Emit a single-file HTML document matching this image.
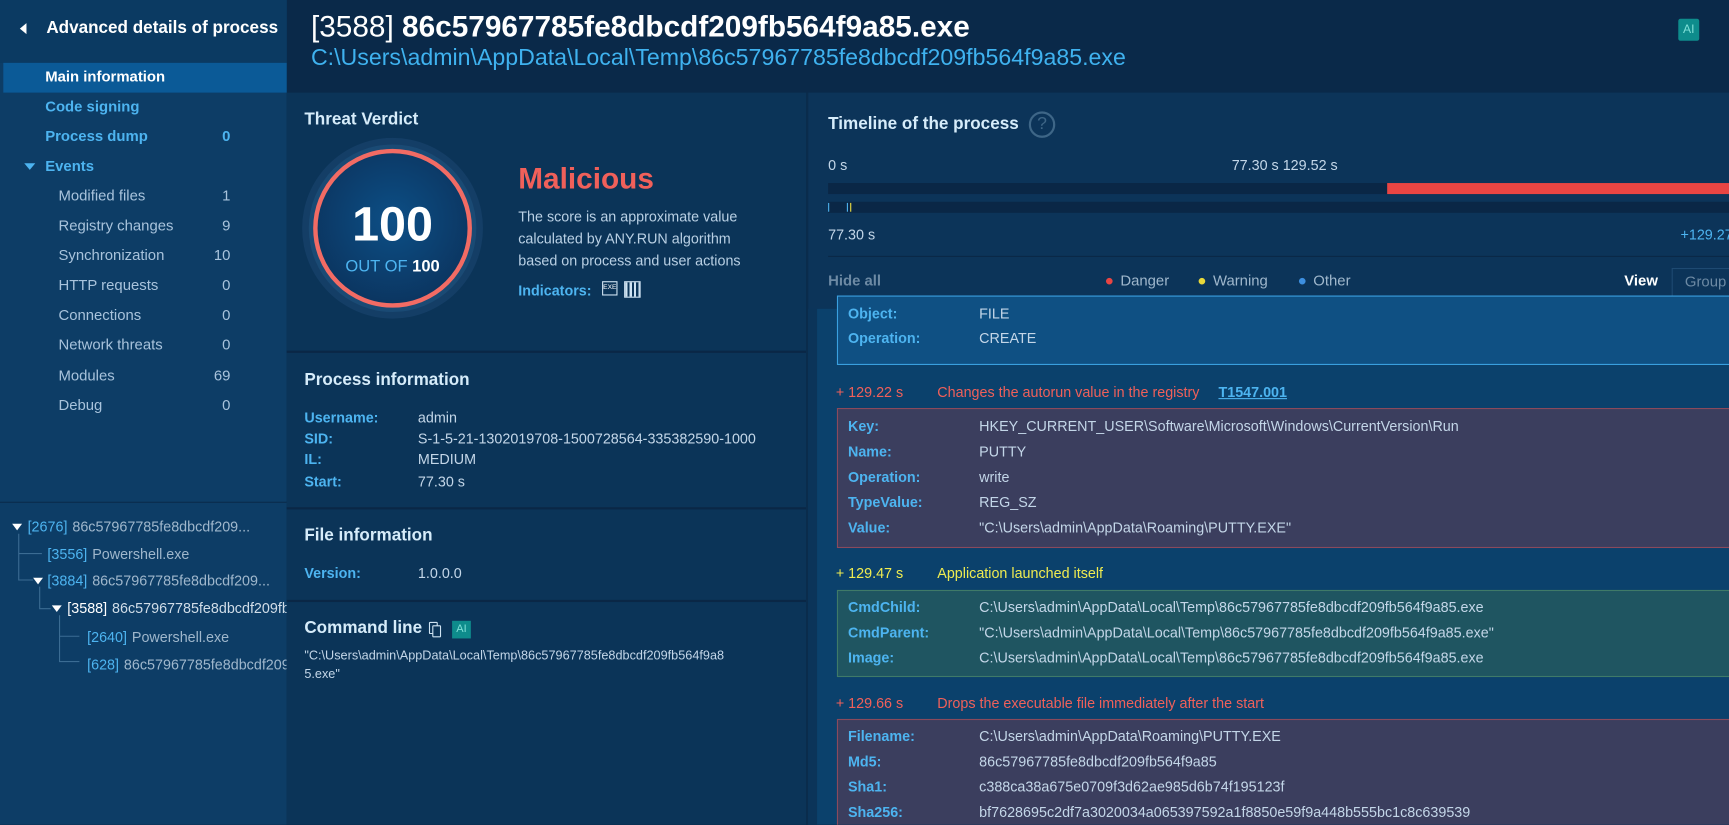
<!DOCTYPE html>
<html><head><meta charset="utf-8"><style>
*{margin:0;padding:0;box-sizing:border-box}
body{width:1729px;height:825px;overflow:hidden;background:#0b2a4a;font-family:"Liberation Sans",sans-serif}
#r{position:absolute;left:0;top:0;width:1568px;height:748px;transform:scale(1.10268);transform-origin:0 0;overflow:hidden;background:#0b2a4a}
.a{position:absolute;white-space:nowrap}
.sb{left:0;top:0;width:260px;height:748px;background:#0d3d66}
.si{font-size:13.5px;color:#a8c3dc;left:53px}
.sh{font-size:13.5px;color:#4db4f0;font-weight:bold;left:41px}
.cnt{left:180px;width:29px;text-align:right;font-size:13.5px;color:#a8c3dc}
.cntb{color:#4db4f0;font-weight:bold}
.lab{font-size:13px;color:#4db4f0;font-weight:bold}
.val{font-size:13px;color:#c3d6e8}
.h{font-size:15.5px;color:#d6ecfa;font-weight:bold}
.card{position:absolute;left:759px;width:820px}
.pid{color:#4db4f0;font-size:13px}
.pn{color:#9fb7cc;font-size:13px}
</style></head><body><div id="r">
<div class="a" style="left:260px;top:0;width:1308px;height:84px;background:#0a2949"></div>
<div class="a" style="left:282px;top:9px;font-size:27px;color:#fff"><span style="font-weight:normal">[3588]</span> <b>86c57967785fe8dbcdf209fb564f9a85.exe</b></div>
<div class="a" style="left:282px;top:41px;font-size:21px;color:#3fb2ef">C:\Users\admin\AppData\Local\Temp\86c57967785fe8dbcdf209fb564f9a85.exe</div>
<div class="a" style="left:1522px;top:17px;width:19px;height:20px;background:#0e8c8c;color:#7fe0d8;font-size:11px;text-align:center;line-height:20px;border-radius:2px">AI</div>
<div class="a sb"></div>
<div class="a" style="left:0;top:0;width:260px;height:57px;background:#0b3a62"></div>
<div class="a" style="left:18px;top:21px;width:0;height:0;border-top:5px solid transparent;border-bottom:5px solid transparent;border-right:6px solid #fff"></div>
<div class="a" style="left:42px;top:17px;font-size:15.5px;color:#fff;font-weight:bold">Advanced details of process</div>
<div class="a" style="left:3px;top:57px;width:257px;height:27px;background:#0b5a97"></div>
<div class="a" style="left:41px;top:62px;font-size:13.5px;color:#fff;font-weight:bold">Main information</div>
<div class="a sh" style="top:89px">Code signing</div>
<div class="a sh" style="top:116px">Process dump</div><div class="a cnt cntb" style="top:116px">0</div>
<div class="a" style="left:22px;top:148px;width:0;height:0;border-left:5px solid transparent;border-right:5px solid transparent;border-top:6px solid #4db4f0"></div>
<div class="a sh" style="top:143px">Events</div>
<div class="a si" style="top:170px">Modified files</div><div class="a cnt" style="top:170px">1</div>
<div class="a si" style="top:197px">Registry changes</div><div class="a cnt" style="top:197px">9</div>
<div class="a si" style="top:224px">Synchronization</div><div class="a cnt" style="top:224px">10</div>
<div class="a si" style="top:251px">HTTP requests</div><div class="a cnt" style="top:251px">0</div>
<div class="a si" style="top:278px">Connections</div><div class="a cnt" style="top:278px">0</div>
<div class="a si" style="top:305px">Network threats</div><div class="a cnt" style="top:305px">0</div>
<div class="a si" style="top:333px">Modules</div><div class="a cnt" style="top:333px">69</div>
<div class="a si" style="top:360px">Debug</div><div class="a cnt" style="top:360px">0</div>
<div class="a" style="left:0;top:455px;width:260px;height:1px;background:#0a2c4c"></div>
<svg class="a" style="left:0;top:460px" width="260" height="160"><g stroke="#3b6c93" fill="none" stroke-width="1">
<path d="M17 24 V66 H30 M17 42 H38"/><path d="M36 72 V92 H46"/><path d="M54 98 V140 H72 M54 117 H72"/></g>
<g fill="#fff"><path d="M11 15 h9 l-4.5 6z"/><path d="M30 64 h9 l-4.5 6z"/><path d="M47 89 h9 l-4.5 6z"/></g></svg>
<div class="a" style="left:25px;top:469px"><span class="pid">[2676]</span> <span class="pn">86c57967785fe8dbcdf209...</span></div>
<div class="a" style="left:43px;top:494px"><span class="pid">[3556]</span> <span class="pn">Powershell.exe</span></div>
<div class="a" style="left:43px;top:518px"><span class="pid">[3884]</span> <span class="pn">86c57967785fe8dbcdf209...</span></div>
<div class="a" style="left:61px;top:543px;width:199px;overflow:hidden"><span class="pid" style="color:#fff">[3588]</span> <span class="pn" style="color:#d0dde8">86c57967785fe8dbcdf209fb564f9a85.exe</span></div>
<div class="a" style="left:79px;top:569px"><span class="pid">[2640]</span> <span class="pn">Powershell.exe</span></div>
<div class="a" style="left:79px;top:594px;width:181px;overflow:hidden"><span class="pid">[628]</span> <span class="pn">86c57967785fe8dbcdf209fb564f9a85.exe</span></div>
<div class="a" style="left:260px;top:84px;width:471px;height:664px;background:#0b3458"></div>
<div class="a h" style="left:276px;top:100px">Threat Verdict</div>
<svg class="a" style="left:271px;top:122px" width="170" height="170">
<defs><radialGradient id="g" cx="50%" cy="45%" r="55%"><stop offset="0" stop-color="#0d4f86"/><stop offset="1" stop-color="#0b3560"/></radialGradient></defs>
<circle cx="85" cy="85" r="82" fill="#143e66"/><circle cx="85" cy="85" r="76" fill="#1a4a74"/>
<circle cx="85" cy="85" r="70" fill="url(#g)" stroke="#f26b64" stroke-width="4"/></svg>
<div class="a" style="left:276px;top:179px;width:160px;text-align:center;font-size:44px;color:#fff;font-weight:bold">100</div>
<div class="a" style="left:276px;top:233px;width:160px;text-align:center;font-size:15px;color:#4db4f0">OUT OF <b style="color:#fff">100</b></div>
<div class="a" style="left:470px;top:147px;font-size:27px;color:#f0605a;font-weight:bold">Malicious</div>
<div class="a" style="left:470px;top:187px;font-size:13px;color:#b9d0e4;line-height:20px">The score is an approximate value<br>calculated by ANY.RUN algorithm<br>based on process and user actions</div>
<div class="a" style="left:470px;top:256px;font-size:13px;color:#4db4f0;font-weight:bold">Indicators:</div>
<div class="a" style="left:546px;top:255px;width:14px;height:13px;border:1px solid #cfe3f2;font-size:6px;color:#fff;text-align:center;line-height:11px">EXE</div>
<div class="a" style="left:566px;top:255px;width:15px;height:15px;border:1px solid #cfe3f2;background:repeating-linear-gradient(90deg,#cfe3f2 0 2px,transparent 2px 4px)"></div>
<div class="a" style="left:260px;top:318px;width:471px;height:2px;background:#0a2746"></div>
<div class="a h" style="left:276px;top:336px">Process information</div>
<div class="a lab" style="left:276px;top:371px">Username:</div><div class="a val" style="left:379px;top:371px">admin</div>
<div class="a lab" style="left:276px;top:390px">SID:</div><div class="a val" style="left:379px;top:390px">S-1-5-21-1302019708-1500728564-335382590-1000</div>
<div class="a lab" style="left:276px;top:409px">IL:</div><div class="a val" style="left:379px;top:409px">MEDIUM</div>
<div class="a lab" style="left:276px;top:429px">Start:</div><div class="a val" style="left:379px;top:429px">77.30 s</div>
<div class="a" style="left:260px;top:460px;width:471px;height:2px;background:#0a2746"></div>
<div class="a h" style="left:276px;top:477px">File information</div>
<div class="a lab" style="left:276px;top:512px">Version:</div><div class="a val" style="left:379px;top:512px">1.0.0.0</div>
<div class="a" style="left:260px;top:544px;width:471px;height:2px;background:#0a2746"></div>
<div class="a h" style="left:276px;top:561px">Command line</div>
<div class="a" style="left:389px;top:564px;width:8px;height:11px;border:1.5px solid #cfe3f2;border-radius:1px"></div>
<div class="a" style="left:392px;top:567px;width:8px;height:11px;border:1.5px solid #cfe3f2;background:#0b3458;border-radius:1px"></div>
<div class="a" style="left:410px;top:563px;width:17px;height:16px;background:#0e8c8c;color:#7fe0d8;font-size:10px;text-align:center;line-height:16px">AI</div>
<div class="a" style="left:276px;top:587px;font-size:11.5px;color:#c3d6e8;line-height:17px">"C:\Users\admin\AppData\Local\Temp\86c57967785fe8dbcdf209fb564f9a8<br>5.exe"</div>
<div class="a" style="left:731px;top:84px;width:2px;height:664px;background:#0a2c4c"></div>
<div class="a" style="left:733px;top:84px;width:835px;height:196px;background:#0c3459"></div>
<div class="a" style="left:733px;top:280px;width:835px;height:468px;background:#0b416c"></div>
<div class="a" style="left:733px;top:280px;width:8px;height:468px;background:#0b3459"></div>
<div class="a h" style="left:751px;top:104px">Timeline of the process</div>
<div class="a" style="left:933px;top:101px;width:24px;height:24px;border:2px solid #3e6687;border-radius:50%;color:#3e6687;font-size:16px;text-align:center;line-height:20px">?</div>
<div class="a val" style="left:751px;top:142px">0 s</div>
<div class="a val" style="left:1117px;top:142px">77.30 s 129.52 s</div>
<div class="a" style="left:751px;top:166px;width:817px;height:10px;background:#0a2746"></div>
<div class="a" style="left:1258px;top:166px;width:310px;height:10px;background:#e94543"></div>
<div class="a" style="left:751px;top:183px;width:817px;height:10px;background:#0a2746"></div>
<div class="a" style="left:751px;top:184px;width:1px;height:8px;background:#4db4f0"></div>
<div class="a" style="left:768px;top:184px;width:1px;height:8px;background:#4db4f0"></div>
<div class="a" style="left:771px;top:184px;width:1px;height:8px;background:#f0e040"></div>
<div class="a val" style="left:751px;top:205px">77.30 s</div>
<div class="a" style="left:1524px;top:205px;font-size:13px;color:#4db4f0">+129.27 s</div>
<div class="a" style="left:751px;top:232px;width:817px;height:1px;background:#0a2746"></div>
<div class="a" style="left:751px;top:247px;font-size:13.5px;color:#6d8aa4;font-weight:bold">Hide all</div>
<div class="a" style="left:1003px;top:252px;width:6px;height:6px;border-radius:50%;background:#e94543"></div>
<div class="a" style="left:1016px;top:247px;font-size:13.5px;color:#9fb7cc">Danger</div>
<div class="a" style="left:1087px;top:252px;width:6px;height:6px;border-radius:50%;background:#e8d83a"></div>
<div class="a" style="left:1100px;top:247px;font-size:13.5px;color:#9fb7cc">Warning</div>
<div class="a" style="left:1178px;top:252px;width:6px;height:6px;border-radius:50%;background:#3d8fe0"></div>
<div class="a" style="left:1191px;top:247px;font-size:13.5px;color:#9fb7cc">Other</div>
<div class="a" style="left:1473px;top:247px;font-size:13.5px;color:#fff;font-weight:bold">View</div>
<div class="a" style="left:1516px;top:243px;width:70px;height:26px;border:1px solid #1e4a72;font-size:13.5px;color:#6d8aa4;padding:4px 0 0 11px">Group</div>
<div class="card" style="top:268px;height:63px;background:#0f5083;border:1px solid #3aa0e0"></div>
<div class="a lab" style="left:769px;top:277px">Object:</div><div class="a val" style="left:888px;top:277px">FILE</div>
<div class="a lab" style="left:769px;top:299px">Operation:</div><div class="a val" style="left:888px;top:299px">CREATE</div>
<div class="a" style="left:758px;top:348px;font-size:13px;color:#f0605a">+ 129.22 s</div>
<div class="a" style="left:850px;top:348px;font-size:13px;color:#f0605a">Changes the autorun value in the registry</div>
<div class="a" style="left:1105px;top:348px;font-size:13px;color:#4db4f0;font-weight:bold;text-decoration:underline">T1547.001</div>
<div class="card" style="top:370px;height:127px;background:#3b3e5e;border:1px solid #8a4a5c"></div>
<div class="a lab" style="left:769px;top:379px">Key:</div><div class="a val" style="left:888px;top:379px">HKEY_CURRENT_USER\Software\Microsoft\Windows\CurrentVersion\Run</div>
<div class="a lab" style="left:769px;top:402px">Name:</div><div class="a val" style="left:888px;top:402px">PUTTY</div>
<div class="a lab" style="left:769px;top:425px">Operation:</div><div class="a val" style="left:888px;top:425px">write</div>
<div class="a lab" style="left:769px;top:448px">TypeValue:</div><div class="a val" style="left:888px;top:448px">REG_SZ</div>
<div class="a lab" style="left:769px;top:471px">Value:</div><div class="a val" style="left:888px;top:471px">"C:\Users\admin\AppData\Roaming\PUTTY.EXE"</div>
<div class="a" style="left:758px;top:512px;font-size:13px;color:#f0ec50">+ 129.47 s</div>
<div class="a" style="left:850px;top:512px;font-size:13px;color:#f0ec50">Application launched itself</div>
<div class="card" style="top:535px;height:79px;background:#1f5561;border:1px solid #3f7a68"></div>
<div class="a lab" style="left:769px;top:543px">CmdChild:</div><div class="a val" style="left:888px;top:543px">C:\Users\admin\AppData\Local\Temp\86c57967785fe8dbcdf209fb564f9a85.exe</div>
<div class="a lab" style="left:769px;top:566px">CmdParent:</div><div class="a val" style="left:888px;top:566px">"C:\Users\admin\AppData\Local\Temp\86c57967785fe8dbcdf209fb564f9a85.exe"</div>
<div class="a lab" style="left:769px;top:589px">Image:</div><div class="a val" style="left:888px;top:589px">C:\Users\admin\AppData\Local\Temp\86c57967785fe8dbcdf209fb564f9a85.exe</div>
<div class="a" style="left:758px;top:630px;font-size:13px;color:#f0605a">+ 129.66 s</div>
<div class="a" style="left:850px;top:630px;font-size:13px;color:#f0605a">Drops the executable file immediately after the start</div>
<div class="card" style="top:652px;height:110px;background:#3b3e5e;border:1px solid #8a4a5c"></div>
<div class="a lab" style="left:769px;top:660px">Filename:</div><div class="a val" style="left:888px;top:660px">C:\Users\admin\AppData\Roaming\PUTTY.EXE</div>
<div class="a lab" style="left:769px;top:683px">Md5:</div><div class="a val" style="left:888px;top:683px">86c57967785fe8dbcdf209fb564f9a85</div>
<div class="a lab" style="left:769px;top:706px">Sha1:</div><div class="a val" style="left:888px;top:706px">c388ca38a675e0709f3d62ae985d6b74f195123f</div>
<div class="a lab" style="left:769px;top:729px">Sha256:</div><div class="a val" style="left:888px;top:729px">bf7628695c2df7a3020034a065397592a1f8850e59f9a448b555bc1c8c639539</div>
</div></body></html>
